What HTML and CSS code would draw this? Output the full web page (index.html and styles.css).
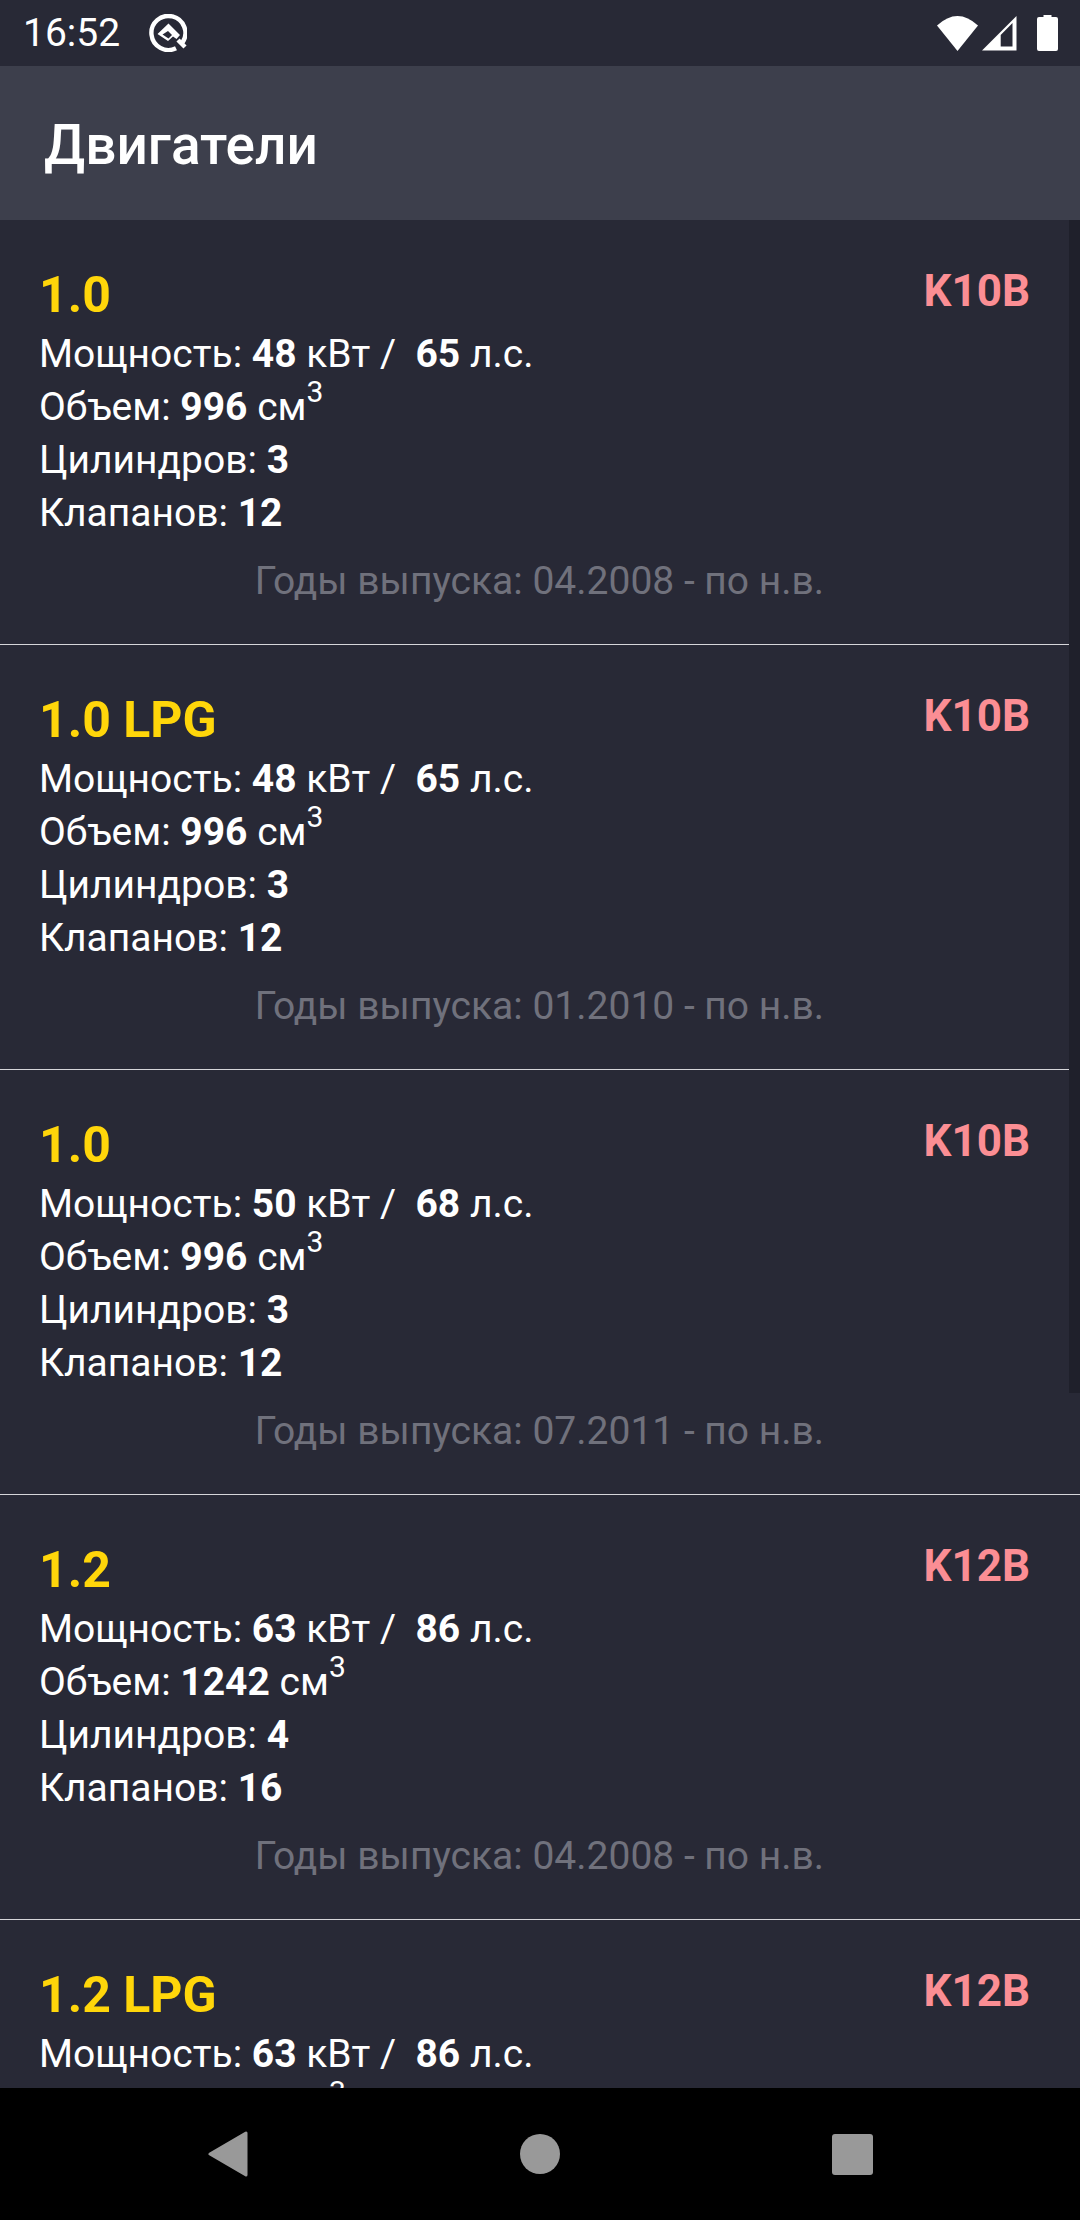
FILE: index.html
```html
<!DOCTYPE html>
<html lang="ru">
<head>
<meta charset="utf-8">
<title>Двигатели</title>
<link rel="stylesheet" href="styles.css">
</head>
<body>
<div class="phone">
  <header class="status">
    <div class="status-left">
      <span class="clock">16:52</span>
      <svg class="q-icon" width="38" height="38" viewBox="0 0 38 38"><path d="M27 34.2A17 17 0 1 1 33.5 28.5" fill="none" stroke="#fff" stroke-width="4.4"/><path d="M19.5 9.5 31 21 27.5 25 24 22.5 19 27 8.5 20Z" fill="#fff"/><path d="M19 17 13.5 20.5 19.5 24.5 23 21Z" fill="#282936"/><path d="M29 26 36 33" stroke="#fff" stroke-width="4.4"/></svg>
    </div>
    <div class="status-right">
      <svg class="wifi" width="41" height="35" viewBox="0 0 41 35"><path d="M0 9.5Q20.500-9.500 41 9.500L20.500 35Z" fill="#fff"/></svg>
      <svg class="signal" width="35" height="35" viewBox="0 0 35 35"><path fill-rule="evenodd" d="M0 34.500 34.500 0V34.500ZM18.700 30.500H30.500V7L18.700 19Z" fill="#fff"/></svg>
      <svg class="battery" width="21" height="36" viewBox="0 0 21 36"><path d="M6.500 0H14.500V2H19Q21 2 21 4V34Q21 36 19 36H2Q0 36 0 34V4Q0 2 2 2H6.500Z" fill="#fff"/></svg>
    </div>
  </header>
  <div class="appbar"><h1>Двигатели</h1></div>
  <main class="list">
    <section class="item">
      <div class="head"><span class="name">1.0</span><span class="code">K10B</span></div>
      <p>Мощность: <b>48</b> кВт / &nbsp;<b>65</b> л.с.</p>
      <p>Объем: <b>996</b> см<sup>3</sup></p>
      <p>Цилиндров: <b>3</b></p>
      <p>Клапанов: <b>12</b></p>
      <div class="years">Годы выпуска: 04.2008 - по н.в.</div>
    </section>
    <section class="item">
      <div class="head"><span class="name">1.0 LPG</span><span class="code">K10B</span></div>
      <p>Мощность: <b>48</b> кВт / &nbsp;<b>65</b> л.с.</p>
      <p>Объем: <b>996</b> см<sup>3</sup></p>
      <p>Цилиндров: <b>3</b></p>
      <p>Клапанов: <b>12</b></p>
      <div class="years">Годы выпуска: 01.2010 - по н.в.</div>
    </section>
    <section class="item">
      <div class="head"><span class="name">1.0</span><span class="code">K10B</span></div>
      <p>Мощность: <b>50</b> кВт / &nbsp;<b>68</b> л.с.</p>
      <p>Объем: <b>996</b> см<sup>3</sup></p>
      <p>Цилиндров: <b>3</b></p>
      <p>Клапанов: <b>12</b></p>
      <div class="years">Годы выпуска: 07.2011 - по н.в.</div>
    </section>
    <section class="item">
      <div class="head"><span class="name">1.2</span><span class="code">K12B</span></div>
      <p>Мощность: <b>63</b> кВт / &nbsp;<b>86</b> л.с.</p>
      <p>Объем: <b>1242</b> см<sup>3</sup></p>
      <p>Цилиндров: <b>4</b></p>
      <p>Клапанов: <b>16</b></p>
      <div class="years">Годы выпуска: 04.2008 - по н.в.</div>
    </section>
    <section class="item">
      <div class="head"><span class="name">1.2 LPG</span><span class="code">K12B</span></div>
      <p>Мощность: <b>63</b> кВт / &nbsp;<b>86</b> л.с.</p>
      <p>Объем: <b>1242</b> см<sup>3</sup></p>
    </section>
    <div class="scrollbar"></div>
  </main>
  <nav class="navbar">
    <svg class="nav-back" width="40" height="46" viewBox="0 0 40 46"><path d="M38 2V44L2 23Z" fill="#999" stroke="#999" stroke-width="3" stroke-linejoin="round"/></svg>
    <svg class="nav-home" width="40" height="40" viewBox="0 0 40 40"><circle cx="20" cy="20" r="20" fill="#999"/></svg>
    <svg class="nav-recent" width="41" height="41" viewBox="0 0 41 41"><rect width="41" height="41" rx="3" fill="#999"/></svg>
  </nav>
</div>
</body>
</html>
```
FILE: styles.css
```css
* { box-sizing: border-box; margin: 0; padding: 0; }
html, body { background: #282936; }
body { font-family: Roboto, "Noto Sans", sans-serif; color: #fff; }
.phone { width: 1080px; height: 2220px; display: flex; flex-direction: column; overflow: hidden; }
.status { height: 66px; flex: none; background: #282936; display: flex; justify-content: space-between; align-items: center; padding: 0 22px 0 23px; }
.status-left { display: flex; align-items: center; gap: 29px; }
.clock { font-size: 39px; line-height: 66px; }
.q-icon { display: block; }
.status-right { display: flex; align-items: center; gap: 4px; }
.status-right svg { display: block; }
.battery { margin-left: 16px; }
.appbar { height: 154px; flex: none; background: #3d3f4c; display: flex; align-items: center; padding: 4px 0 0 44px; }
.appbar h1 { font-size: 55px; font-weight: 500; line-height: 60px; }
.list { flex: 1; min-height: 0; overflow: hidden; position: relative; background: #282936; }
.item { height: 425px; padding: 45px 50px 0 39px; border-bottom: 1px solid #d6d6da; }
.head { display: flex; justify-content: space-between; align-items: flex-start; height: 60px; margin-bottom: 3px; }
.name { font-size: 50px; font-weight: 700; color: #ffd60a; line-height: 60px; }
.code { font-size: 44px; font-weight: 700; color: #fb8e94; line-height: 53px; }
.item p { font-size: 39px; line-height: 53px; white-space: nowrap; }
.item b { font-weight: 700; }
.item sup { font-size: 30px; line-height: 0; vertical-align: 18px; }
.years { margin-top: 16px; text-align: center; font-size: 39px; line-height: 50px; color: #70717c; padding-left: 10px; }
.scrollbar { position: absolute; top: 0; right: 0; width: 11px; height: 1173px; background: #1f202b; }
.navbar { height: 132px; flex: none; background: #000; display: flex; justify-content: center; align-items: center; gap: 272px; }
.navbar svg { display: block; }
```
